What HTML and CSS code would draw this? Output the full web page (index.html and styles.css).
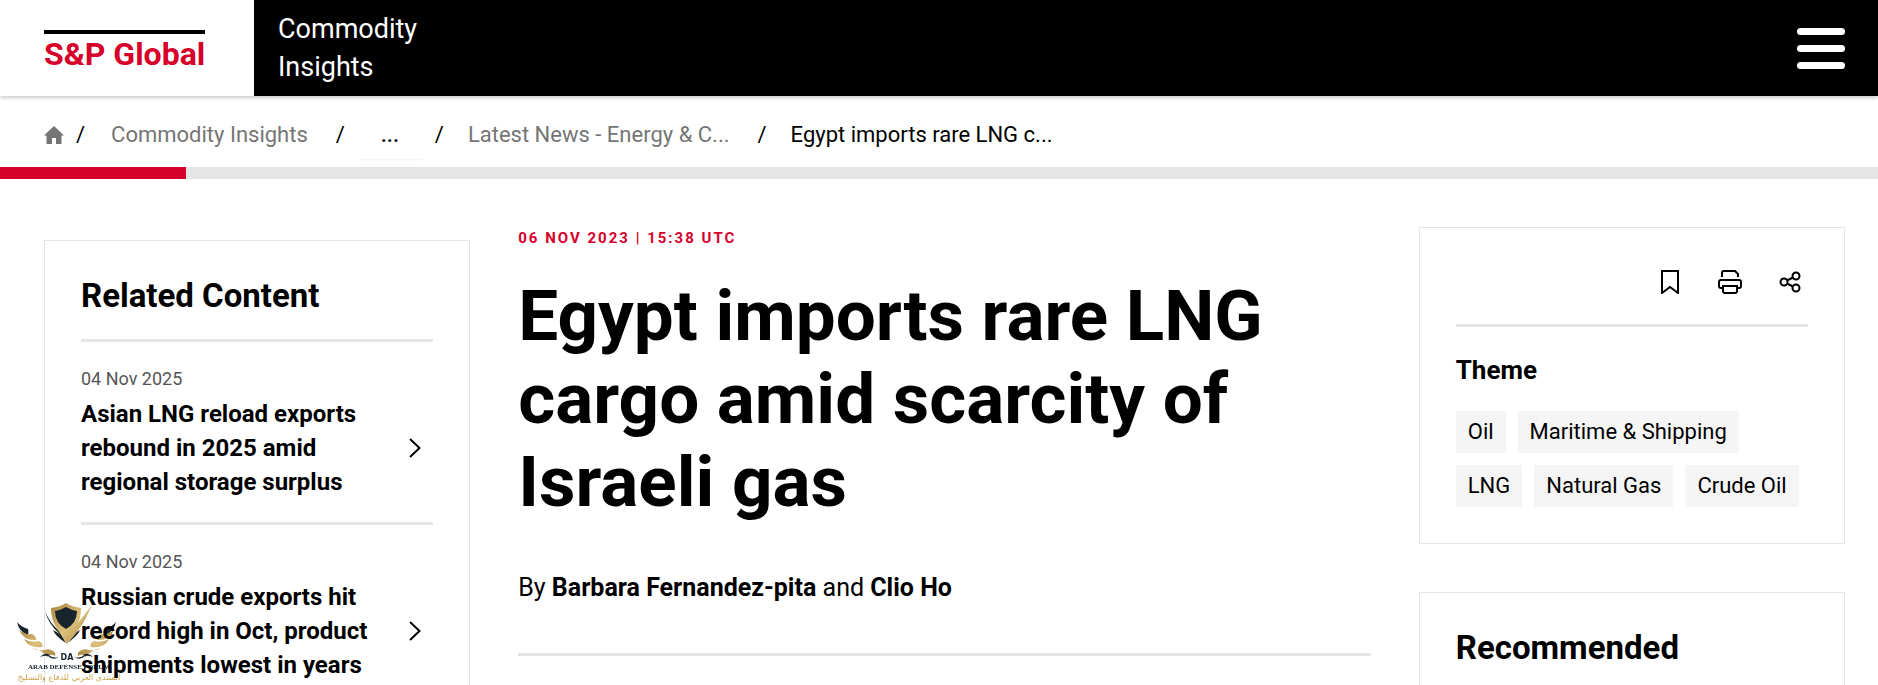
FILE: index.html
```html
<!DOCTYPE html>
<html lang="en">
<head>
  <meta charset="UTF-8">
  <meta name="viewport" content="width=device-width, initial-scale=1.0">
  <title>Egypt imports rare LNG cargo amid scarcity of Israeli gas | S&amp;P Global Commodity Insights</title>
  <link rel="stylesheet" href="styles.css">
</head>
<body>
  <header class="site-header">
    <a class="brand" href="#"><span class="brand-name">S&amp;P Global</span></a>
    <a class="division" href="#">Commodity Insights</a>
    <button class="menu-btn" type="button" aria-label="Menu">
      <span></span>
      <span></span>
      <span></span>
    </button>
  </header>

  <nav class="breadcrumb" aria-label="Breadcrumb">
    <a class="home" href="#" aria-label="Home">
      <svg width="20" height="18" viewBox="0 0 20 18"><path fill="#757575" d="M10 0 20 9.500H17.500V18H12V12H8V18H2.500V9.500H0Z"/></svg>
    </a>
    <span class="sep first">/</span>
    <a href="#">Commodity Insights</a>
    <span class="sep">/</span>
    <button class="more" type="button" aria-label="Show all levels">...</button>
    <span class="sep short">/</span>
    <a href="#">Latest News - Energy &amp; C...</a>
    <span class="sep">/</span>
    <span class="current">Egypt imports rare LNG c...</span>
  </nav>
  <div class="progress"><div class="progress-bar"></div></div>

  <main class="layout">
    <aside class="card related">
      <h2>Related Content</h2>
      <ul>
        <li>
          <time>04 Nov 2025</time>
          <a href="#">
            <span>Asian LNG reload exports rebound in 2025 amid regional storage surplus</span>
            <svg width="12" height="20" viewBox="0 0 12 20"><path d="M1 1 10.500 10 1 19" fill="none" stroke="#000" stroke-width="2"/></svg>
          </a>
        </li>
        <li>
          <time>04 Nov 2025</time>
          <a href="#">
            <span>Russian crude exports hit record high in Oct, product shipments lowest in years</span>
            <svg width="12" height="20" viewBox="0 0 12 20"><path d="M1 1 10.500 10 1 19" fill="none" stroke="#000" stroke-width="2"/></svg>
          </a>
        </li>
      </ul>
    </aside>

    <article class="article">
      <p class="stamp">06 Nov 2023 | 15:38 UTC</p>
      <h1>Egypt imports rare LNG cargo amid scarcity of Israeli gas</h1>
      <p class="byline">By <strong>Barbara Fernandez-pita</strong> and <strong>Clio Ho</strong></p>
    </article>

    <aside class="side">
      <section class="card theme">
        <div class="tools">
          <button type="button" aria-label="Bookmark">
            <svg width="24" height="24" viewBox="0 0 24 24"><path d="M4 1H20V23L12 17 4 23Z"/></svg>
          </button>
          <button type="button" aria-label="Print">
            <svg width="24" height="24" viewBox="0 0 24 24"><path d="M4 7V3Q4 1 6 1H17L20 4V7M5 18H3Q1 18 1 16V12Q1 10 3 10H21Q23 10 23 12V16Q23 18 21 18H19M5 16H19V21Q19 23 17 23H7Q5 23 5 21Z"/></svg>
          </button>
          <button type="button" aria-label="Share">
            <svg width="24" height="24" viewBox="0 0 24 24"><circle cx="6" cy="12" r="3.500"/><circle cx="18" cy="6" r="3.500"/><circle cx="18" cy="18" r="3.500"/><path d="M9 10.500 15 7.500M9 13.500 15 16.500"/></svg>
          </button>
        </div>
        <h3>Theme</h3>
        <div class="tags">
          <a href="#">Oil</a>
          <a href="#">Maritime &amp; Shipping</a>
          <a href="#">LNG</a>
          <a href="#">Natural Gas</a>
          <a href="#">Crude Oil</a>
        </div>
      </section>
      <section class="card">
        <h2>Recommended</h2>
      </section>
    </aside>
  </main>

  <svg class="watermark" width="104" height="82" viewBox="0 0 104 82">
    <defs>
      <linearGradient id="gold" x1="0" y1="0" x2="1" y2="1">
        <stop offset="0" stop-color="#a8853c"/>
        <stop offset=".5" stop-color="#dcc07c"/>
        <stop offset="1" stop-color="#a8853c"/>
      </linearGradient>
      <g id="wing">
        <path fill="#17242c" d="M0 19Q4 24 11 26 12 29 11 32 2 29 0 19Z"/>
        <path fill="url(#gold)" d="M2 27Q8 32 15 31 20 34 19 37 7 38 2 27ZM7 36Q14 40 22 38 27 41 25 44 12 46 7 36ZM14 45Q22 49 31 46 40 48 38 53 34 50 30 54 26 47 14 45Z"/>
        <path fill="#17242c" d="M23 54Q27 50 31 51 35 56 42 54 36 58 31 53 28 52 23 54Z"/>
        <path fill="#17242c" d="M28 8Q32 19 42 28L49 40Q38 33 36 27L43 31Q31 21 28 8Z"/>
      </g>
    </defs>
    <use href="#wing"/>
    <use href="#wing" transform="matrix(-1 0 0 1 99 0)"/>
    <path fill="url(#gold)" d="M49 0Q55 4 64 5 64 19 57 25L75 2Q66 24 50 41 45 33 41 27 34 18 34 5 43 4 49 0Z"/>
    <path fill="#17242c" d="M49 4Q54 7 60 8 60 20 49 26 38 20 38 8 44 7 49 4Z"/>
    <text class="mark-da" x="50" y="57">DA</text>
    <text class="mark-en" x="52" y="66">ARAB DEFENSE FORUM</text>
    <text class="mark-ar" x="52" y="77">المنتدى العربي للدفاع والتسليح</text>
  </svg>
</body>
</html>
```
FILE: styles.css
```css
* {
  box-sizing: border-box;
}
body {
  margin: 0;
  font-family: Roboto, "Liberation Sans", sans-serif;
  font-size: 20px;
  color: #000;
  background: #fff;
}
a {
  color: inherit;
  text-decoration: none;
}
h1, h2, h3, p, ul {
  margin: 0;
  padding: 0;
}
button {
  padding: 0;
  border: 0;
  background: none;
  font: inherit;
  color: inherit;
  cursor: pointer;
}

/* header */
.site-header {
  display: flex;
  align-items: center;
  height: 96px;
  padding-right: 33px;
  background: #000;
  color: #fff;
  box-shadow: 0 2px 4px rgba(0,0,0,0.2);
}
.brand {
  align-self: stretch;
  width: 254px;
  padding: 30px 44px 0;
  background: #fff;
}
.brand-name {
  display: inline-block;
  border-top: 4px solid #000;
  padding-top: 4px;
  font-size: 32px;
  font-weight: 700;
  line-height: 32px;
  white-space: nowrap;
  color: #d6002a;
}
.division {
  width: 180px;
  margin-left: 24px;
  font-size: 27px;
  line-height: 38px;
}
.menu-btn {
  display: flex;
  flex-direction: column;
  gap: 10px;
  width: 48px;
  margin-left: auto;
}
.menu-btn span {
  height: 7px;
  border-radius: 4px;
  background: #fff;
}

/* breadcrumb */
.breadcrumb {
  display: flex;
  align-items: center;
  height: 71px;
  padding: 6px 44px 0;
  font-size: 22px;
  color: #757575;
}
.home {
  display: flex;
}
.sep {
  margin: 0 24px 0 28px;
  color: #000;
}
.sep.first {
  margin: 0 26px 0 12px;
}
.sep.short {
  margin-left: 12px;
}
.more {
  width: 66px;
  height: 48px;
  margin-left: -12px;
  font-weight: 500;
  color: #000;
  box-shadow: 0 2px 3px -2px rgba(0,0,0,0.1);
}
.current {
  color: #000;
}
.progress {
  height: 12px;
  background: #e5e5e5;
}
.progress-bar {
  width: 9.9%;
  height: 100%;
  background: #d6002a;
}

/* columns */
.layout {
  display: grid;
  grid-template-columns: 1fr 2fr 1fr;
  gap: 48px;
  align-items: start;
  padding: 48px 33px 0 44px;
}
.card {
  padding: 36px;
  border: 1px solid #e5e5e5;
}
.card h2 {
  font-size: 33px;
  font-weight: 700;
  line-height: 38px;
  padding-bottom: 24px;
  border-bottom: 3px solid #e5e5e5;
}

/* related */
.related {
  margin-top: 13px;
}
.related ul {
  list-style: none;
}
.related li {
  padding: 24px 0 23px;
  border-bottom: 3px solid #e5e5e5;
}
.related time {
  display: block;
  margin-bottom: 5px;
  font-size: 18px;
  line-height: 26px;
  color: #555;
}
.related li a {
  display: flex;
  align-items: center;
  justify-content: space-between;
  padding-right: 12px;
  font-size: 24px;
  font-weight: 700;
  line-height: 34px;
}
.related li a span {
  width: 304px;
}

/* article */
.article {
  padding-bottom: 48px;
  border-bottom: 3px solid #e5e5e5;
}
.stamp {
  font-size: 15px;
  font-weight: 700;
  line-height: 22px;
  letter-spacing: 2px;
  text-transform: uppercase;
  color: #d6002a;
}
h1 {
  margin-top: 25px;
  font-size: 71px;
  font-weight: 700;
  line-height: 83px;
}
.byline {
  margin-top: 48px;
  font-size: 25px;
  line-height: 34px;
}
.byline strong {
  font-weight: 700;
}

/* right column */
.side {
  display: grid;
  gap: 48px;
}
.tools {
  display: flex;
  justify-content: flex-end;
  gap: 36px;
  padding: 6px 6px 30px;
  border-bottom: 3px solid #e5e5e5;
}
.tools svg {
  display: block;
  fill: none;
  stroke: #000;
  stroke-width: 2;
}
.theme h3 {
  margin-top: 25px;
  font-size: 26px;
  font-weight: 700;
  line-height: 37px;
}
.tags {
  display: flex;
  flex-wrap: wrap;
  gap: 12px;
  margin-top: 22px;
}
.tags a {
  padding: 6px 12px;
  font-size: 22px;
  line-height: 30px;
  background: #f5f5f5;
}

/* forum mark over the page corner */
.watermark {
  position: fixed;
  left: 17px;
  bottom: 0;
  mix-blend-mode: multiply;
}
.watermark text {
  text-anchor: middle;
}
.mark-da {
  font: bold 8px "DejaVu Sans", sans-serif;
  fill: #17242c;
}
.mark-en {
  font: bold 7px "Liberation Serif", serif;
  fill: #17242c;
}
.mark-ar {
  font: 8px "DejaVu Sans", sans-serif;
  fill: #c9a24c;
}
```
